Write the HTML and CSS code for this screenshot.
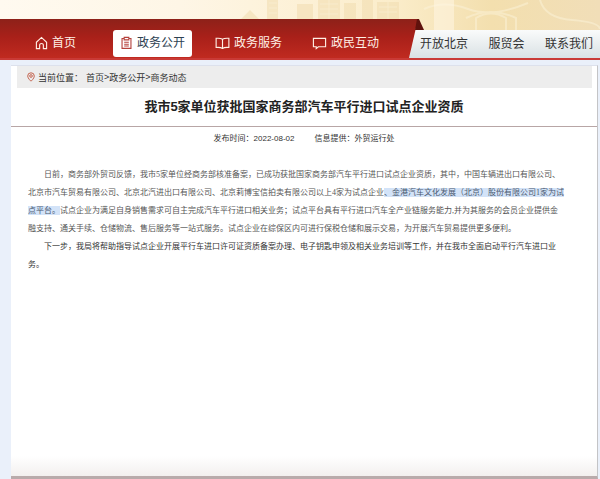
FILE: index.html
```html
<!DOCTYPE html>
<html lang="zh-CN">
<head>
<meta charset="utf-8">
<meta name="viewport" content="width=device-width, initial-scale=1">
<title>我市5家单位获批国家商务部汽车平行进口试点企业资质</title>
<link rel="stylesheet" href="styles.css">
</head>
<body>
<header class="header">
  <svg class="skyline" viewBox="0 0 600 60" preserveAspectRatio="xMidYMin slice" aria-hidden="true">
    <defs>
      <linearGradient id="sky" x1="0" x2="1">
        <stop offset="0" stop-color="#fffaf0"/><stop offset=".3" stop-color="#fef6e6"/>
        <stop offset=".65" stop-color="#fbedcb"/><stop offset=".82" stop-color="#f3dfae"/><stop offset="1" stop-color="#f1deb8"/>
      </linearGradient>
    </defs>
    <path fill="url(#sky)" d="M0 0h600v60H0z"/>
    <g fill="#f2deb2" opacity=".6">
      <path d="M241 19l9-9 9 9zM267 0h11v19h-11zM297 4h16v15h-16zM318 0h22v19h-22zM344 3h12v16h-12zM362 0h11v19h-11zM377 2h22v17h-22z"/>
    </g>
    <g fill="none" stroke="#fcf3da" opacity=".5">
      <path d="M269 3h8M269 8h8M269 13h8M320 4h18M320 9h18M320 14h18M329 0v19M379 7h18M379 12h18M388 2v17"/>
      <path stroke-width="2" d="M424 9q20-9 44 0t60-6M466 18q25-12 50 0v12M476 30V18q15-9 30 0v12M540 0q5 18 32 20t28 9"/>
    </g>
    <path fill="#fff8e8" opacity=".5" d="M434 0h20v30h-20z"/>
  </svg>
  <nav class="nav" aria-label="主导航">
    <div class="primary">
      <a class="tab home" href="#"><svg class="icon" viewBox="0 0 14 14"><path d="M1.5 6.200L7 1l5.500 5.200V13H9V9.500a2 2 0 0 0-4 0V13H1.500z"/></svg>首页</a>
      <a class="tab active" href="#" aria-current="page"><svg class="icon" viewBox="0 0 14 14"><path d="M4.500 2.200H2.200v10.600h9.600V2.200H9.500M4.500 1h5v2.600h-5zM4.500 6.200h5M4.500 8.300h5M4.500 10.300h5"/></svg>政务公开</a>
      <a class="tab" href="#"><svg class="icon wide" viewBox="0 0 16 14"><path d="M8 3Q6 1.600 1.200 2v9.800Q6 11.400 8 12.800 10 11.400 14.800 11.800V2Q10 1.600 8 3zM8 3v9.500"/></svg>政务服务</a>
      <a class="tab" href="#"><svg class="icon wide" viewBox="0 0 16 14"><path d="M1.500 2h13v9H6.800L4.500 13v-2h-3z"/></svg>政民互动</a>
    </div>
    <svg class="fold" viewBox="0 0 16 39" preserveAspectRatio="none" aria-hidden="true">
      <defs><linearGradient id="red" x2="0" y2="1"><stop offset="0" stop-color="#8d2119"/><stop offset=".45" stop-color="#a82019"/><stop offset="1" stop-color="#c02a20"/></linearGradient></defs>
      <path fill="url(#red)" d="M0 0h10L1 39H0z"/><path fill="#5f120d" d="M9 0h2l5 11H7z"/>
    </svg>
    <div class="secondary">
      <a href="#">开放北京</a><a href="#">服贸会</a><a href="#">联系我们</a>
    </div>
  </nav>
</header>
<main class="page">
  <div class="crumbs">
    <svg class="pin" viewBox="0 0 10 10" aria-hidden="true"><path d="M5 .8a3.300 3.300 0 0 1 3.300 3.300C8.300 6.300 5 9.300 5 9.300S1.700 6.300 1.700 4.100A3.300 3.300 0 0 1 5 .8z"/><circle cx="5" cy="4" r="1.300"/></svg>
    <span class="label">当前位置：</span><a href="#">首页</a>&gt;<a href="#">政务公开</a>&gt;<a href="#">商务动态</a>
  </div>
  <article>
    <h1>我市5家单位获批国家商务部汽车平行进口试点企业资质</h1>
    <div class="meta"><span>发布时间：2022-08-02</span><span>信息提供：外贸运行处</span></div>
    <div class="content">
      <p>日前，商务部外贸司反馈，我市5家单位经商务部核准备案，已成功获批国家商务部汽车平行进口试点企业资质，其中，中国车辆进出口有限公司、<br>北京市汽车贸易有限公司、北京北汽进出口有限公司、北京莉博宝信拍卖有限公司以上4家为试点企业<mark>、金港汽车文化发展（北京）股份有限公司1家为试<br>点平台。</mark>试点企业为满足自身销售需求可自主完成汽车平行进口相关业务；试点平台具有平行进口汽车全产业链服务能力,并为其服务的会员企业提供金<br>融支持、通关手续、仓储物流、售后服务等一站式服务。试点企业在综保区内可进行保税仓储和展示交易，为开展汽车贸易提供更多便利。</p>
      <p class="next">下一步，我局将帮助指导试点企业开展平行车进口许可证资质备案办理、电子钥匙申领及相关业务培训等工作，并在我市全面启动平行汽车进口业<br>务。</p>
    </div>
  </article>
</main>
</body>
</html>
```
FILE: styles.css
```css
* { box-sizing: border-box; }
body {
  margin: 0;
  min-height: 100vh;
  display: flex;
  flex-direction: column;
  font-family: "Liberation Sans", "Noto Sans CJK SC", sans-serif;
  color: #333;
  background: #eaf0fa;
}
a { color: inherit; text-decoration: none; }

.header { position: relative; padding-top: 19px; overflow: hidden; }
.skyline { position: absolute; inset: 0; width: 100%; height: 100%; }
.nav {
  position: relative;
  display: flex;
  align-items: stretch;
  height: 41px;
  border-bottom: 2px solid #c93a36;
  font-size: 12px;
  line-height: 18px;
}
.primary {
  display: flex;
  flex: 0 0 68%;
  align-items: center;
  gap: 16px;
  padding: 9px 0 0 28px;
  background: linear-gradient(#8d2119, #a82019 45%, #c02a20);
  color: #fff0e6;
}
.tab {
  display: flex;
  align-items: center;
  gap: 4px;
  height: 27px;
  padding: 0 7px;
  border-radius: 3px;
  white-space: nowrap;
}
.home { margin-right: 14px; }
.active { background: #fff; color: #2d4152; }
.active .icon { stroke: #b5413c; }
.icon { width: 13px; height: 14px; fill: none; stroke: currentColor; stroke-width: 1.2; }
.wide { width: 15px; }
.fold { flex: none; width: 16px; height: 39px; position: relative; z-index: 1; }
.secondary {
  display: flex;
  flex: 1;
  align-items: center;
  justify-content: space-between;
  margin: 11px 0 0 -16px;
  padding: 0 7px 0 12px;
  background: linear-gradient(#fafbfb, #d9e1e4);
  white-space: nowrap;
}

.page {
  flex: 1;
  margin: 5px 2px 0 11px;
  background: linear-gradient(transparent calc(100% - 20px), #f3f0ef), #fff;
  border-top: 1px solid #dde1ec;
  border-right: 1px solid #c4c4c6;
  border-bottom: 3px solid #b9abab;
}
.crumbs {
  display: flex;
  align-items: center;
  height: 22px;
  margin: 0 5px 0 6px;
  padding-left: 9px;
  background: #ededed;
  font-size: 9px;
}
.pin { width: 10px; height: 10px; margin-right: 2px; fill: none; stroke: #c4634e; }
.label { margin-right: 3px; }
h1 {
  margin: 0;
  padding: 9px 0;
  border-bottom: 1px solid #b8a6a6;
  font-size: 13px;
  line-height: 20px;
  text-align: center;
  color: #222;
}
.meta {
  display: flex;
  justify-content: center;
  gap: 20px;
  padding: 6px 0;
  font-size: 8px;
  line-height: 12px;
}
.content {
  padding: 15px 17px;
  font-family: "Liberation Serif", "Noto Sans CJK SC", serif;
  font-size: 8px;
  line-height: 18px;
  color: #555;
  white-space: nowrap;
}
.content p { margin: 0; text-indent: 2em; }
.content .next { color: #333; }
mark { background: #d3e3f8; color: #4b5a70; }
```
